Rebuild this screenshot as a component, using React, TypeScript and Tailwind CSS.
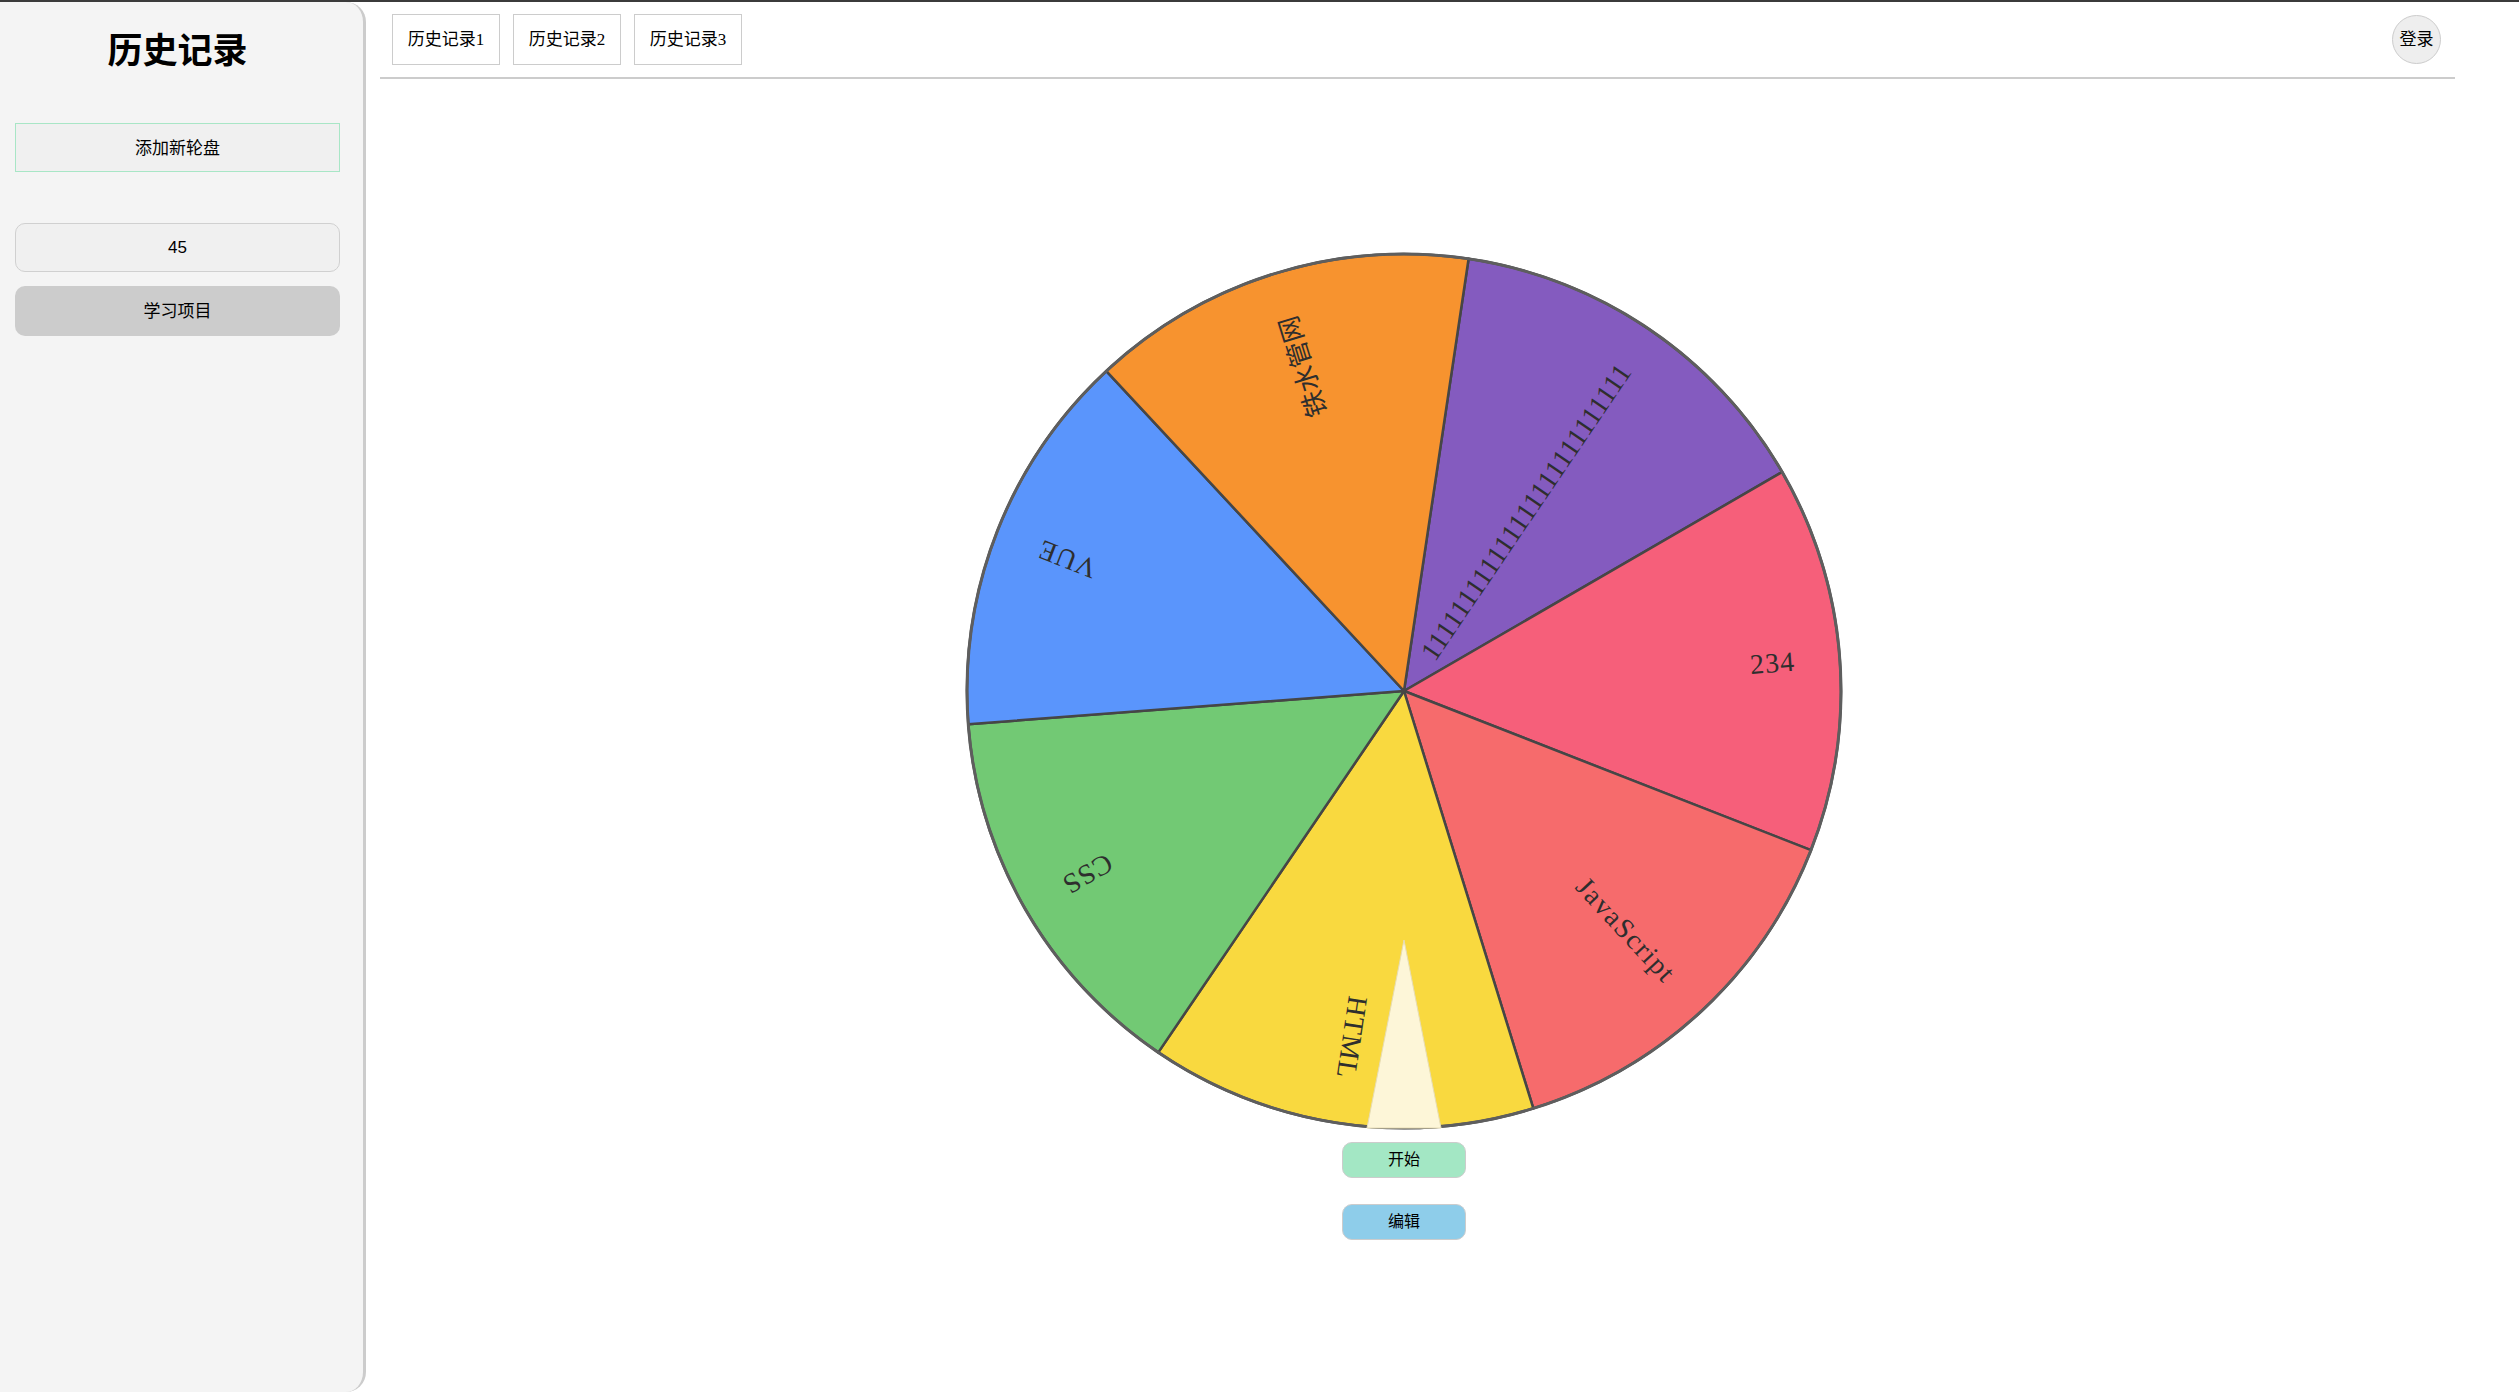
import React from "react";

const serif = "'Liberation Serif', 'Noto Sans CJK SC', serif";
const sans = "'Liberation Sans', 'Noto Sans CJK SC', sans-serif";

interface Slice {
  label: string;
  color: string;
  size?: number;
  spacing?: number;
}

// 顺时针，从 8.5° 开始
const slices: Slice[] = [
  { label: "111111111111111111111111111", color: "#845bbf", spacing: 0 },
  { label: "234", color: "#f65f7a" },
  { label: "JavaScript", color: "#f66b6c", spacing: 1.5 },
  { label: "HTML", color: "#f9d93f" },
  { label: "CSS", color: "#72c974" },
  { label: "VUE", color: "#5a95fc" },
  { label: "铁水管网", color: "#f7932f", size: 26, spacing: 0 },
];

const Wheel = () => {
  const size = 880;
  const c = size / 2;
  const r = 437;
  const start = 8.5;
  const step = 360 / slices.length;

  const pt = (deg: number, rad: number) => {
    const a = (deg * Math.PI) / 180;
    return [c + rad * Math.sin(a), c - rad * Math.cos(a)];
  };

  return (
    <svg width={size} height={size} viewBox={`0 0 ${size} ${size}`}>
      {slices.map((s, i) => {
        const a = start + i * step;
        const b = a + step;
        const [x1, y1] = pt(a, r);
        const [x2, y2] = pt(b, r);
        return (
          <path
            key={s.label}
            d={`M ${c} ${c} L ${x1} ${y1} A ${r} ${r} 0 0 1 ${x2} ${y2} Z`}
            fill={s.color}
            stroke="#464646"
            strokeWidth={2.5}
            strokeLinejoin="round"
          />
        );
      })}
      <circle cx={c} cy={c} r={r} fill="none" stroke="#5e5e5e" strokeWidth={3} />
      {slices.map((s, i) => {
        const mid = start + i * step + step / 2;
        return (
          <text
            key={`t-${s.label}`}
            x={c + 392}
            y={c}
            textAnchor="end"
            dominantBaseline="central"
            transform={`rotate(${mid - 90} ${c} ${c})`}
            fontFamily={serif}
            fontSize={s.size ?? 28}
            letterSpacing={s.spacing ?? 1}
            fill="#2e2e2e"
          >
            {s.label}
          </text>
        );
      })}
      {/* 指针 */}
      <polygon
        points={`${c},${c + 249} ${c - 37},${c + 437} ${c + 37},${c + 437}`}
        fill="#fdf6d8"
        stroke="#e6dcb4"
        strokeWidth={1}
      />
    </svg>
  );
};

export default function App() {
  return (
    <div className="flex h-[1392px] border-t-2 border-[#3b3b3b] bg-white">
      {/* 侧边栏 */}
      <aside className="w-[366px] shrink-0 h-full bg-[#f4f4f4] border-r-[3px] border-[#cccccc] rounded-r-[20px] pl-[15px]">
        <div className="w-[325px] flex flex-col">
          <h1
            className="mt-[29px] text-center text-[35px] leading-[42px] font-bold text-black"
            style={{ fontFamily: serif }}
          >
            历史记录
          </h1>
          <button
            className="mt-[50px] h-[49px] w-full pt-[2px] bg-[#f0f0f0] border border-[#a8e6c6] text-[17px] text-black"
            style={{ fontFamily: sans }}
          >
            添加新轮盘
          </button>
          <div
            className="mt-[51px] h-[49px] w-full flex items-center justify-center bg-[#f0f0f0] border border-[#d0d0d0] rounded-[10px] text-[17px] text-black"
            style={{ fontFamily: sans }}
          >
            45
          </div>
          <button
            className="mt-[14px] h-[50px] w-full pt-[2px] bg-[#cccccc] rounded-[10px] text-[17px] text-black"
            style={{ fontFamily: sans }}
          >
            学习项目
          </button>
        </div>
      </aside>

      {/* 主区域 */}
      <main className="flex-1 flex flex-col">
        <header className="ml-[14px] mr-[64px] h-[77px] flex items-center justify-between pl-[12px] pr-[14px] border-b-2 border-[#cccccc]">
          <div className="flex gap-[13px]">
            {["历史记录1", "历史记录2", "历史记录3"].map((t) => (
              <button
                key={t}
                className="w-[108px] h-[51px] bg-white border border-[#cccccc] text-[17px] text-black"
                style={{ fontFamily: serif }}
              >
                {t}
              </button>
            ))}
          </div>
          <button
            className="w-[49px] h-[49px] rounded-full bg-[#eeeeee] border border-[#cccccc] text-[17px] text-black"
            style={{ fontFamily: sans }}
          >
            登录
          </button>
        </header>

        <div className="ml-[14px] mr-[64px] pr-[27px] flex flex-col items-center">
          <div className="mt-[172px]">
            <Wheel />
          </div>
          <button
            className="mt-[11px] w-[124px] h-[36px] rounded-[10px] bg-[#a3e7c4] border border-[#cccccc] text-[16px] text-black"
            style={{ fontFamily: sans }}
          >
            开始
          </button>
          <button
            className="mt-[26px] w-[124px] h-[36px] rounded-[10px] bg-[#8ecdea] border border-[#cccccc] text-[16px] text-black"
            style={{ fontFamily: sans }}
          >
            编辑
          </button>
        </div>
      </main>
    </div>
  );
}
